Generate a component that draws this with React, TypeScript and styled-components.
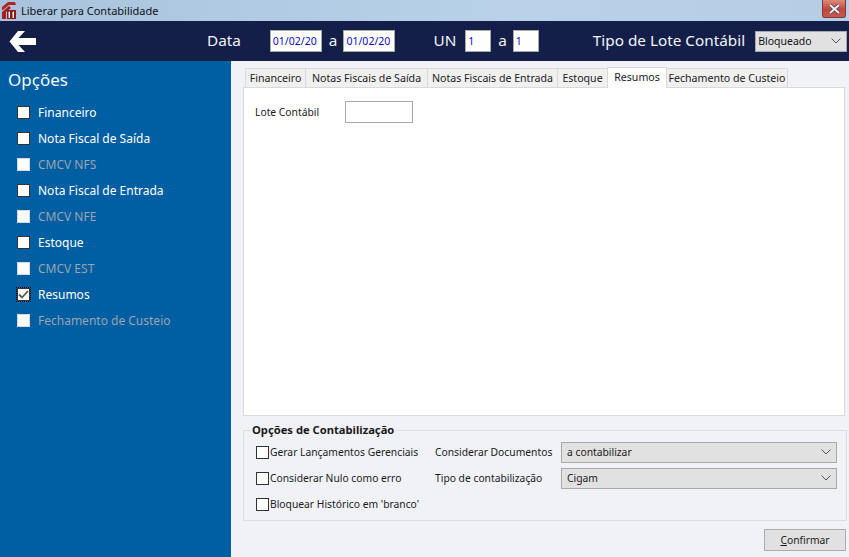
import styled, { createGlobalStyle } from "styled-components";

const FONT = `"Noto Sans", "Open Sans", "Liberation Sans", sans-serif`;

const GlobalStyle = createGlobalStyle`
  html, body {
    margin: 0;
    padding: 0;
    background: #f0f2f8;
  }
  body {
    font-family: ${FONT};
    color: #1a1a1a;
  }
`;

const sideOptions = [
  { label: "Financeiro" },
  { label: "Nota Fiscal de Saída" },
  { label: "CMCV NFS", disabled: true },
  { label: "Nota Fiscal de Entrada" },
  { label: "CMCV NFE", disabled: true },
  { label: "Estoque" },
  { label: "CMCV EST", disabled: true },
  { label: "Resumos", checked: true },
  { label: "Fechamento de Custeio", disabled: true },
];

const tabs = [
  { label: "Financeiro", width: 61 },
  { label: "Notas Fiscais de Saída", width: 123 },
  { label: "Notas Fiscais de Entrada", width: 131 },
  { label: "Estoque", width: 51 },
  { label: "Resumos", width: 60, active: true },
  { label: "Fechamento de Custeio", width: 122 },
];

const Chevron = () => (
  <svg width="10" height="6" viewBox="0 0 10 6" fill="none">
    <path d="M0.5 0.5 L5 5 L9.5 0.5" stroke="#555" strokeWidth="1" />
  </svg>
);

const Logo = () => (
  <svg width="14" height="17" viewBox="0 0 14 17">
    <path d="M0 5 L6 0 L13 0 L14 3 L7 3 L1 8 L0 8 Z" fill="#b3261e" />
    <path d="M0 10 L7 4 L9 6 L4 10 L4 17 L0 17 Z" fill="#a5201c" />
    <rect x="5" y="8" width="9" height="9" fill="#8f1a18" />
    <path d="M6 11 L8 9 L8 16 L6.6 16 L6.6 11.5 Z M10 11 L12 9 L12 16 L10.6 16 L10.6 11.5 Z" fill="#fff" />
  </svg>
);

export default function App() {
  return (
    <>
      <GlobalStyle />
      <Window>
        <TitleBar>
          <Logo />
          <TitleText>Liberar para Contabilidade</TitleText>
          <CloseButton>
            <svg width="13" height="10" viewBox="0 0 13 10">
              <path d="M2 1 L11 9 M11 1 L2 9" stroke="#3a4a60" strokeWidth="3.4" />
              <path d="M2 1 L11 9 M11 1 L2 9" stroke="#eef1f5" strokeWidth="2" />
            </svg>
          </CloseButton>
        </TitleBar>

        <Header>
          <BackArrow>
            <svg width="27" height="23" viewBox="0 0 27 23">
              <path d="M0.5 11.5 L9 1 L16 1 L9.5 8 L27 8 L27 15 L9.5 15 L16 22 L9 22 Z" fill="#fff" />
            </svg>
          </BackArrow>
          <HeaderLabel $left={171}>Data</HeaderLabel>
          <HeaderInput $left={29} $width={52}>01/02/20</HeaderInput>
          <HeaderLabel $left={7}>a</HeaderLabel>
          <HeaderInput $left={6} $width={52}>01/02/20</HeaderInput>
          <HeaderLabel $left={38}>UN</HeaderLabel>
          <HeaderInput $left={9} $width={26}>1</HeaderInput>
          <HeaderLabel $left={7}>a</HeaderLabel>
          <HeaderInput $left={6} $width={26}>1</HeaderInput>
          <HeaderLabel $left={54}>Tipo de Lote Contábil</HeaderLabel>
          <HeaderSelect>
            <span>Bloqueado</span>
            <Chevron />
          </HeaderSelect>
        </Header>

        <Body>
          <Sidebar>
            <SideTitle>Opções</SideTitle>
            <SideList>
              {sideOptions.map((o) => (
                <SideRow key={o.label}>
                  <SideCheck $checked={o.checked} $disabled={o.disabled}>
                    {o.checked && (
                      <svg width="11" height="9" viewBox="0 0 11 9" fill="none">
                        <path d="M1 4.5 L4 7.5 L10 1" stroke="#555" strokeWidth="1.8" />
                      </svg>
                    )}
                  </SideCheck>
                  <SideLabel $disabled={o.disabled}>{o.label}</SideLabel>
                </SideRow>
              ))}
            </SideList>
          </Sidebar>

          <Main>
            <TabStrip>
              {tabs.map((t) => (
                <Tab key={t.label} $active={t.active} $width={t.width}>
                  {t.label}
                </Tab>
              ))}
            </TabStrip>
            <TabPanel>
              <FieldLabel>Lote Contábil</FieldLabel>
              <LoteInput />
            </TabPanel>

            <GroupBox>
              <GroupLegend>Opções de Contabilização</GroupLegend>
              <GroupGrid>
                <CheckRow>
                  <SmallCheck />
                  <span>Gerar Lançamentos Gerenciais</span>
                </CheckRow>
                <span>Considerar Documentos</span>
                <GroupSelect>
                  <span>a contabilizar</span>
                  <Chevron />
                </GroupSelect>
                <CheckRow>
                  <SmallCheck />
                  <span>Considerar Nulo como erro</span>
                </CheckRow>
                <span>Tipo de contabilização</span>
                <GroupSelect>
                  <span>Cigam</span>
                  <Chevron />
                </GroupSelect>
                <CheckRow>
                  <SmallCheck />
                  <span>Bloquear Histórico em 'branco'</span>
                </CheckRow>
              </GroupGrid>
            </GroupBox>

            <Footer>
              <ConfirmButton>
                <u>C</u>onfirmar
              </ConfirmButton>
            </Footer>
          </Main>
        </Body>
      </Window>
    </>
  );
}

const Window = styled.div`
  width: 849px;
  height: 557px;
  display: flex;
  flex-direction: column;
  overflow: hidden;
`;

const TitleBar = styled.div`
  height: 21px;
  flex: none;
  display: flex;
  align-items: center;
  padding: 0 3px 0 2px;
  background: linear-gradient(to right, #a9c3de, #b9d2e9 60%, #b5cee6);
  box-sizing: border-box;
`;

const TitleText = styled.span`
  margin-left: 5px;
  font-size: 11px;
  color: #111;
`;

const CloseButton = styled.div`
  margin-left: auto;
  align-self: flex-start;
  width: 24px;
  height: 18px;
  box-sizing: border-box;
  display: flex;
  align-items: center;
  justify-content: center;
  border: 1px solid #7d3a36;
  border-top: none;
  border-radius: 0 0 3px 3px;
  background: linear-gradient(to bottom, #dc8a7d, #c5443a 55%, #c65a4c);
`;

const Header = styled.div`
  height: 40px;
  flex: none;
  display: flex;
  align-items: center;
  padding-left: 9px;
  background: #131f48;
`;

const BackArrow = styled.div`
  display: flex;
  width: 27px;
`;

const HeaderLabel = styled.span<{ $left: number }>`
  margin-left: ${(p) => p.$left}px;
  padding-bottom: 2px;
  font-size: 15.3px;
  white-space: nowrap;
  color: #f2f4f8;
`;

const HeaderInput = styled.div<{ $left: number; $width: number }>`
  margin-left: ${(p) => p.$left}px;
  width: ${(p) => p.$width}px;
  flex: none;
  height: 22px;
  box-sizing: border-box;
  background: #fff;
  border: 1px solid #a9a9a9;
  padding-left: 2px;
  font-size: 10.5px;
  line-height: 20px;
  color: #0a0ac8;
`;

const HeaderSelect = styled.div`
  margin-left: 10px;
  width: 92px;
  flex: none;
  height: 21px;
  box-sizing: border-box;
  display: flex;
  align-items: center;
  justify-content: space-between;
  padding: 0 5px 0 2px;
  background: #e1e1e1;
  border: 1px solid #a9a9a9;
  font-size: 10.5px;
  color: #111;
`;

const Body = styled.div`
  flex: 1;
  display: flex;
  min-height: 0;
`;

const Sidebar = styled.div`
  width: 231px;
  flex: none;
  background: #005ea3;
  padding: 6px 0 0 8px;
  box-sizing: border-box;
`;

const SideTitle = styled.div`
  font-size: 17px;
  line-height: 26px;
  color: #f4f7fb;
`;

const SideList = styled.div`
  margin-top: 6px;
  display: flex;
  flex-direction: column;
`;

const SideRow = styled.div`
  height: 26px;
  display: flex;
  align-items: center;
  padding-left: 9px;
`;

const SideCheck = styled.div<{ $checked?: boolean; $disabled?: boolean }>`
  width: 13px;
  height: 13px;
  box-sizing: border-box;
  background: #fff;
  display: flex;
  align-items: center;
  justify-content: center;
  border: 1px solid ${(p) => (p.$disabled ? "#d5d9dd" : "#333")};
  outline: ${(p) => (p.$checked ? "1px dotted #000" : "none")};
`;

const SideLabel = styled.span<{ $disabled?: boolean }>`
  margin-left: 8px;
  font-size: 12px;
  color: ${(p) => (p.$disabled ? "#9aa5ae" : "#fff")};
`;

const Main = styled.div`
  flex: 1;
  display: flex;
  flex-direction: column;
  padding: 6px 2px 0 12px;
  font-size: 10.3px;
  min-width: 0;
`;

const TabStrip = styled.div`
  height: 20px;
  flex: none;
  display: flex;
  align-items: flex-end;
  padding-left: 2px;
`;

const Tab = styled.div<{ $active?: boolean; $width: number }>`
  width: ${(p) => p.$width}px;
  height: ${(p) => (p.$active ? 21 : 19)}px;
  box-sizing: border-box;
  text-align: center;
  font-size: 10.6px;
  line-height: 18px;
  white-space: nowrap;
  border: 1px solid #d9d9d9;
  border-bottom: none;
  margin-right: -1px;
  background: ${(p) => (p.$active ? "#fff" : "#f0f0f0")};
  position: ${(p) => (p.$active ? "relative" : "static")};
  z-index: 1;
  margin-bottom: ${(p) => (p.$active ? -1 : 0)}px;
`;

const TabPanel = styled.div`
  width: 602px;
  height: 329px;
  flex: none;
  box-sizing: border-box;
  background: #fff;
  border: 1px solid #d9d9d9;
  display: flex;
  align-items: flex-start;
  padding: 13px 0 0 11px;
`;

const FieldLabel = styled.span`
  width: 90px;
  line-height: 22px;
`;

const LoteInput = styled.div`
  width: 68px;
  height: 22px;
  box-sizing: border-box;
  background: #fff;
  border: 1px solid #a9a9a9;
`;

const GroupBox = styled.div`
  position: relative;
  margin-top: 14px;
  width: 604px;
  height: 91px;
  flex: none;
  box-sizing: border-box;
  border: 1px solid #dcdcdc;
  padding: 8px 9px 0 12px;
`;

const GroupLegend = styled.span`
  position: absolute;
  top: -8px;
  left: 6px;
  padding: 0 2px;
  background: #f0f2f8;
  font-size: 11.2px;
  font-weight: 700;
  line-height: 14px;
`;

const GroupGrid = styled.div`
  display: grid;
  grid-template-columns: 179px 126px 276px;
  grid-auto-rows: 26px;
  align-items: center;
`;

const CheckRow = styled.label`
  display: flex;
  align-items: center;
  gap: 1px;
  grid-column: 1;
  white-space: nowrap;
`;

const SmallCheck = styled.span`
  width: 13px;
  height: 13px;
  box-sizing: border-box;
  background: #fff;
  border: 1px solid #333;
`;

const GroupSelect = styled.div`
  height: 21px;
  box-sizing: border-box;
  display: flex;
  align-items: center;
  justify-content: space-between;
  padding: 0 5px 0 5px;
  background: #e1e1e1;
  border: 1px solid #a9a9a9;
`;

const Footer = styled.div`
  margin-top: 8px;
  width: 603px;
  display: flex;
  justify-content: flex-end;
`;

const ConfirmButton = styled.div`
  width: 82px;
  height: 22px;
  box-sizing: border-box;
  background: #e1e1e1;
  border: 1px solid #adadad;
  text-align: center;
  line-height: 20px;
`;
